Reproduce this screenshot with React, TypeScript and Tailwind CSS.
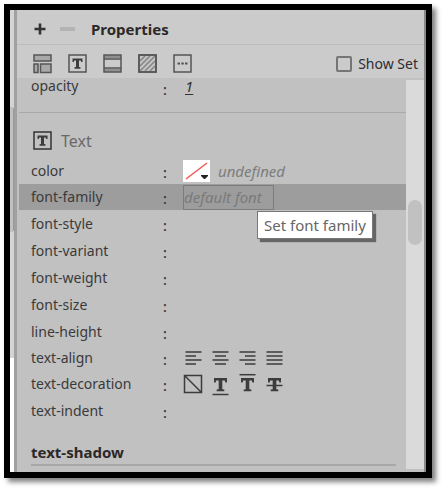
import type { ReactNode } from "react";

const ink = "#3c3c3c";

const smallT = "M4.500 4.500h10v3.500h-1.300l-.5-1.500h-1.700v6.500l1.500.3v1.400h-6v-1.400l1.500-.3v-6.500h-1.700l-.5 1.500H4.500z";

function Icon({ children }: { children: ReactNode }) {
  return (
    <svg width="20" height="20" viewBox="0 0 20 20" fill="none" stroke="currentColor" strokeWidth="1.5" aria-hidden="true">
      {children}
    </svg>
  );
}

const BoxedT = () => (
  <Icon>
    <rect x="1" y="1" width="17" height="17" />
    <path d={smallT} fill={ink} stroke="none" />
  </Icon>
);

const LayoutIcon = () => (
  <Icon>
    <g fill="#a8a8a8">
      <rect x="1" y="1" width="17" height="6" />
      <rect x="1" y="10" width="4" height="8.500" />
      <rect x="7.500" y="10" width="10.500" height="8.500" />
    </g>
  </Icon>
);

const BorderIcon = () => (
  <Icon>
    <path d="M1 2.700h17M1 16.300h17" stroke="#909090" strokeWidth="3" />
    <rect x="1" y="1" width="17" height="17" />
    <path d="M1 5h17M1 14h17" />
  </Icon>
);

const BackgroundIcon = () => (
  <Icon>
    <rect x="1" y="1" width="17" height="17" fill="#c4c4c4" />
    <path d="M2 7l5-5M2 12L12 2M2 17L17 2M7 17L17 7M12 17l5-5" stroke="#858585" />
    <rect x="1" y="1" width="17" height="17" />
  </Icon>
);

const MoreIcon = () => (
  <Icon>
    <rect x="1" y="1" width="17" height="17" />
    <path d="M4.500 9.500h2.500M8.300 9.500h2.500M12 9.500h2.500" strokeWidth="2" />
  </Icon>
);

const aligns = [
  { name: "left", d: "M2.500 4h16M2.500 8h10.500M2.500 12h16M2.500 16h10.500" },
  { name: "center", d: "M2.500 4h16M5 8h11M2.500 12h16M5 16h11" },
  { name: "right", d: "M2.500 4h16M8 8h10.500M2.500 12h16M8 16h10.500" },
  { name: "justify", d: "M2.500 4h16M2.500 8h16M2.500 12h16M2.500 16h16" },
];

const bigT = "M4 4h13v4.500h-1.600l-.6-2h-2.500v8.700l2 .3v1.700H6.700v-1.700l2-.3v-8.700H6.200l-.6 2H4z";

const decorations = [
  { name: "none", glyph: false, d: "M1.500 1.500h17v17h-17zM1.500 1.500l17 17" },
  { name: "underline", glyph: true, d: "M2.500 20.500h16" },
  { name: "overline", glyph: true, d: "M2.500 .7h16" },
  { name: "line-through", glyph: true, d: "M2.500 11.500h16" },
];

function Row({ name, className = "h-[27px] items-center", children }: { name: string; className?: string; children?: ReactNode }) {
  return (
    <div className={`flex pl-3 ${className}`}>
      <span className="w-[132px] shrink-0 text-[#3a3a3a]">{name}</span>
      <span className="w-5 shrink-0 pt-1 font-medium">:</span>
      {children}
    </div>
  );
}

export default function App() {
  return (
    <div className="bg-white pt-1 pr-[13px] pb-[13px] pl-1 font-['Noto_Sans','Open_Sans',sans-serif] text-[14px] leading-5 text-[#333]">
      <div className="flex border-6 border-black bg-[#c1c1c1] shadow-[4px_4px_5px_0px_#00000080]">
        <div className="flex w-[7px] shrink-0 flex-col border-r-3 border-[#a0a0a0] bg-white">
          <div className="h-[97px] bg-[#d4d4d4]" />
          <div className="h-[125px] rounded-r-xs border-r border-[#999] bg-[#c1c1c1]" />
          <div className="h-[126px] bg-[#d4d4d4]" />
        </div>
        <section className="min-w-0 flex-1 border-r-2 border-[#8a8a8a]">
          <header className="flex h-[35px] items-center border-b border-[#bdbdbd] bg-[#cbcbcb] pt-1 pl-[17px]">
            <button aria-label="Add property" className="w-[26px]">
              <svg width="12" height="12" viewBox="0 0 12 12" stroke="#333" strokeWidth="2.600"><path d="M6 .5v11M.5 6h11" /></svg>
            </button>
            <button aria-label="Remove property" className="w-[31px]">
              <svg width="15" height="12" viewBox="0 0 15 12" stroke="#b3b3b3" strokeWidth="4"><path d="M0 6h15" /></svg>
            </button>
            <h1 className="text-[15px] font-bold text-[#2d2828]">Properties</h1>
          </header>
          <div className="flex h-[33px] items-center bg-[#cbcbcb] pt-1 pr-1.5 pl-4 text-[#555]">
            <div className="flex gap-[15px]">
              <button aria-label="Layout"><LayoutIcon /></button>
              <button aria-label="Text"><BoxedT /></button>
              <button aria-label="Border"><BorderIcon /></button>
              <button aria-label="Background"><BackgroundIcon /></button>
              <button aria-label="More"><MoreIcon /></button>
            </div>
            <label className="ml-auto flex items-center gap-1.5 text-[#2d2d35]">
              <input type="checkbox" className="size-4 appearance-none rounded-xs border-2 border-[#757575]" />
              Show Set
            </label>
          </div>
          <div className="flex">
            <div className="min-w-0 flex-1">
              <div className="pl-0.5">
                <Row name="opacity" className="h-[21px] items-start leading-4">
                  <span className="pl-0.5 text-[15px] italic underline underline-offset-2">1</span>
                </Row>
                <hr className="mt-[13px] border-[#a8a8a8]" />
                <h2 className="flex h-11 items-center gap-2 pt-[11px] pl-3.5 text-[16px] text-[#6a6a6a]">
                  <span className="text-[#333]"><BoxedT /></span>
                  Text
                </h2>
                <Row name="color">
                  <button aria-label="Pick color" className="bg-white">
                    <svg width="27" height="22" viewBox="0 0 27 22"><path d="M3 19L24 3" stroke="#f05858" strokeWidth="1.500" /><path d="M18 15h7v1l-3 3h-1l-3-3z" fill="#222" /></svg>
                  </button>
                  <span className="pl-2 text-[15px] text-[#7c7c7c] italic">undefined</span>
                </Row>
                <div className="relative">
                  <Row name="font-family" className="h-[26px] items-center bg-[#9d9d9d]">
                    <input aria-label="font-family" placeholder="default font" className="h-[25px] w-[91px] border border-[#7c7c7c] text-[15px] italic placeholder:text-[#7a7a7a]" />
                  </Row>
                  <div role="tooltip" className="absolute top-[27px] left-[238px] border border-[#777] bg-white px-1.5 py-px text-[15px] leading-6 whitespace-nowrap text-[#666] shadow-[3px_3px_1px_#666]">
                    Set font family
                  </div>
                </div>
                <Row name="font-style" />
                <Row name="font-variant" />
                <Row name="font-weight" />
                <Row name="font-size" />
                <Row name="line-height" />
                <Row name="text-align" className="h-[26px] items-center">
                  <div className="flex gap-[7px]">
                    {aligns.map((a) => (
                      <button key={a.name} aria-label={a.name}>
                        <svg width="20" height="20" viewBox="0 0 20 20" stroke={ink} strokeWidth="1.500"><path d={a.d} /></svg>
                      </button>
                    ))}
                  </div>
                </Row>
                <Row name="text-decoration" className="h-[26px] items-center">
                  <div className="flex gap-[7px]">
                    {decorations.map((t) => (
                      <button key={t.name} aria-label={t.name}>
                        <svg className="overflow-visible" width="20" height="20" viewBox="0 0 20 20" fill="none" stroke={ink} strokeWidth="1.500">
                          {t.glyph && <path d={bigT} fill={ink} stroke="none" />}
                          <path d={t.d} />
                        </svg>
                      </button>
                    ))}
                  </div>
                </Row>
                <Row name="text-indent" />
                <div className="pr-2.5 pb-1.5 pl-3">
                  <h2 className="mt-[18px] h-6 border-b-2 border-[#a8a8a8] text-[15px] font-bold text-[#2d2828]">text-shadow</h2>
                </div>
              </div>
            </div>
            <div className="mt-0.5 mb-[3px] w-[18px] shrink-0 bg-[#dadada] px-0.5 pt-[120px]">
              <div className="h-[45px] rounded-full bg-[#c1c1c1]" />
            </div>
          </div>
        </section>
      </div>
    </div>
  );
}
